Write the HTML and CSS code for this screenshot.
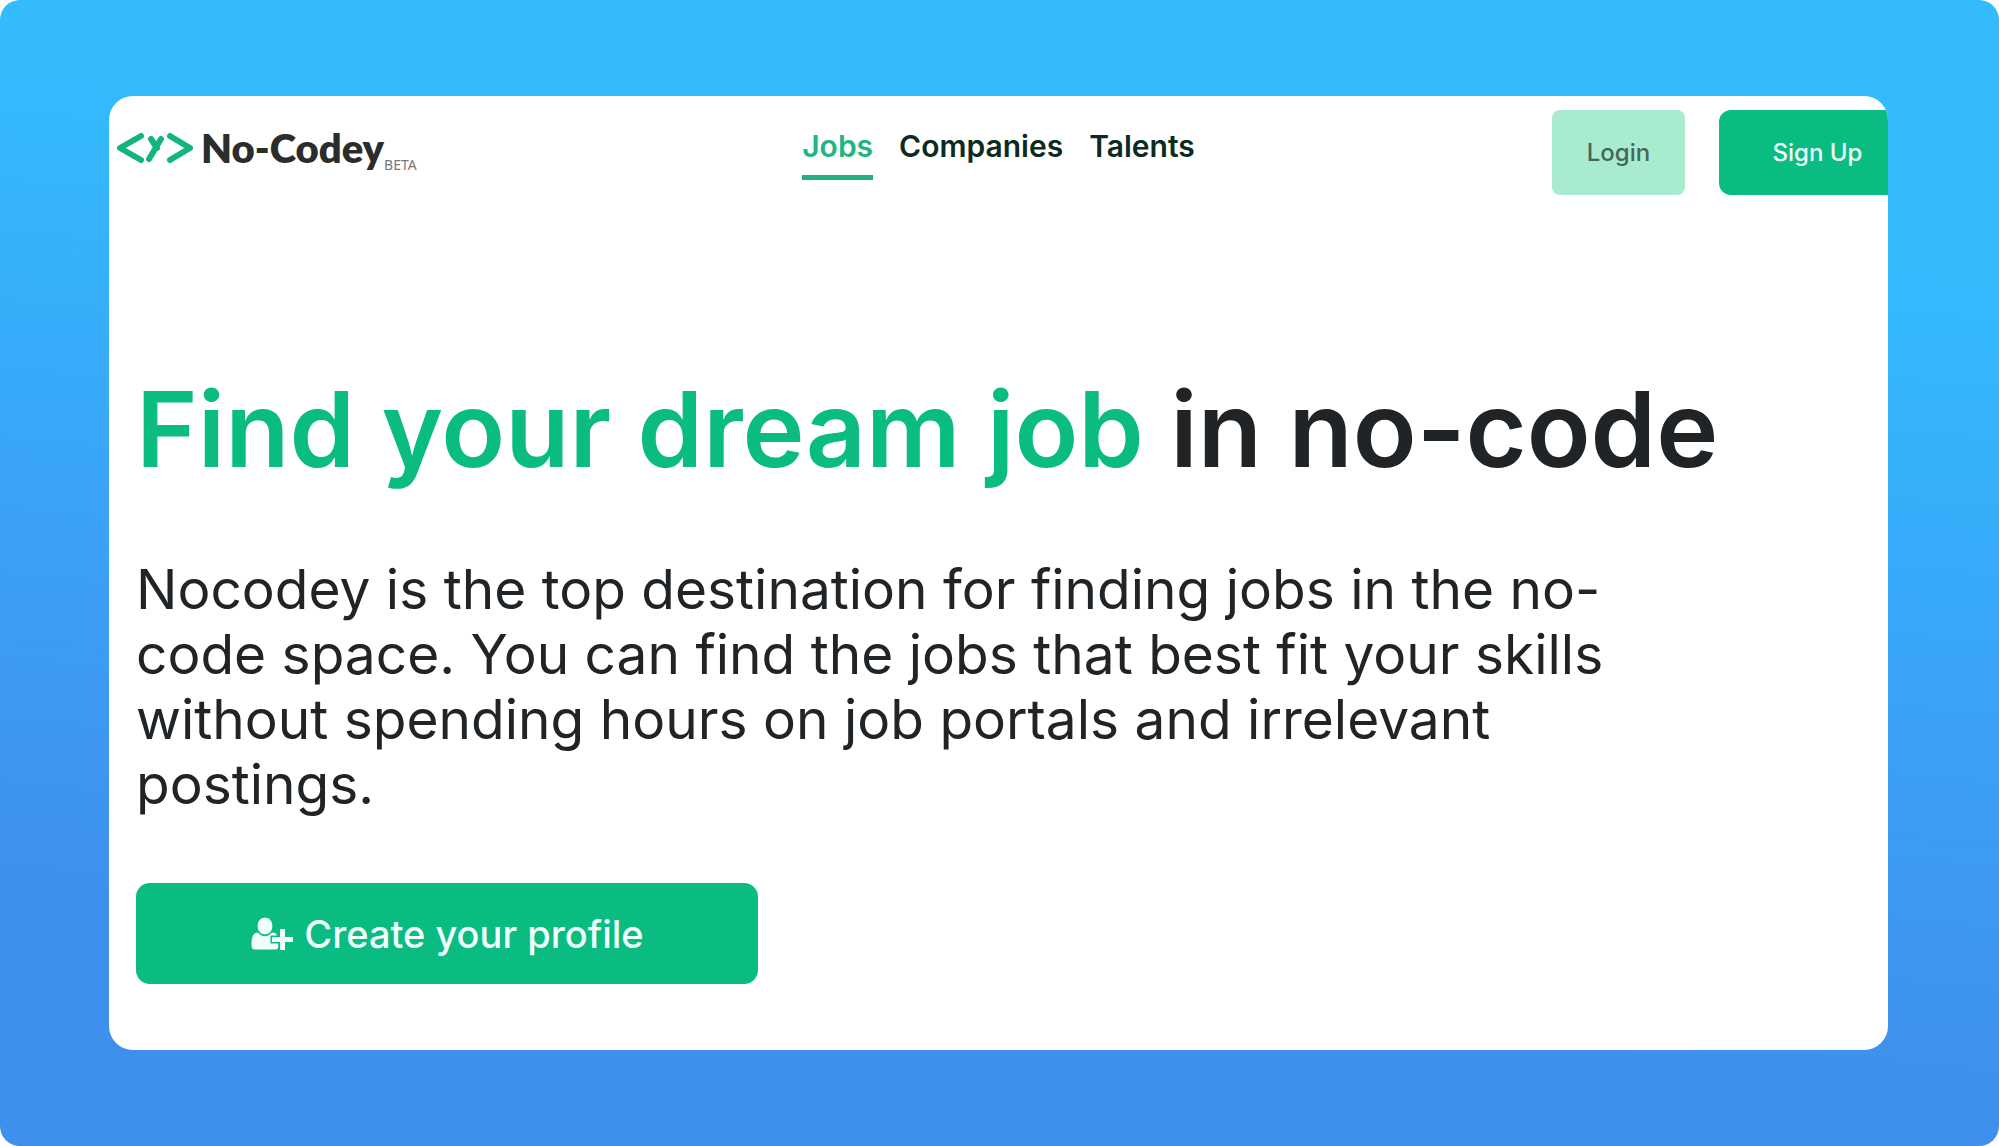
FILE: index.html
```html
<!DOCTYPE html>
<html lang="en">
<head>
<meta charset="utf-8">
<title>No-Codey</title>
<link rel="stylesheet" href="styles.css">
</head>
<body>
<div class="backdrop">
  <div class="card">
    <header class="topbar">
      <a class="brand" href="#">
        <svg class="brand-mark" viewBox="0 0 76 32" aria-hidden="true">
          <path d="M24 4 3 16l21 12M53 4l20 12-20 12M34 7l6 9M44 7 32 27"/>
        </svg>
        <span class="brand-name">No-Codey</span>
        <span class="brand-tag">BETA</span>
      </a>
      <nav class="nav">
        <a class="nav-link nav-link-active" href="#">Jobs</a>
        <a class="nav-link" href="#">Companies</a>
        <a class="nav-link" href="#">Talents</a>
      </nav>
      <div class="actions">
        <button class="button button-login" type="button">Login</button>
        <button class="button button-signup" type="button">Sign Up</button>
      </div>
    </header>
    <main class="hero">
      <h1 class="title"><span class="title-accent">Find your dream job</span> in no-code</h1>
      <p class="lead">Nocodey is the top destination for finding jobs in the no-code space. You can find the jobs that best fit your skills without spending hours on job portals and irrelevant postings.</p>
      <button class="button button-profile" type="button">
        <svg class="profile-icon" viewBox="0 0 44 34" aria-hidden="true">
          <path class="profile-body" d="M1 27c0-7 2-12 7-12 4 5 10 5 14 0 5 0 7 4 7 12 0 4-1 6-4 6H5c-3 0-4-2-4-6z"/>
          <ellipse class="profile-body" cx="15" cy="9" rx="8" ry="9"/>
          <path class="profile-plus" d="M30 12h5v8h8v5h-8v8h-5v-8h-8v-5h8z"/>
        </svg>
        <span>Create your profile</span>
      </button>
    </main>
  </div>
</div>
</body>
</html>
```
FILE: styles.css
```css
* { box-sizing: border-box; }
body { margin: 0; background: #fff; font-family: Inter, "Liberation Sans", sans-serif; }
.backdrop {
  min-height: 100vh;
  padding: 96px 111px 96px 109px;
  border-radius: 20px;
  background: linear-gradient(186deg, #33bbfe 21%, #3aa4f8 50%, #3f8fec 82%);
}
.card { overflow: hidden; border-radius: 24px; background: #fff; padding-bottom: 66px; }
.topbar {
  display: grid;
  grid-template-columns: 1fr auto 1fr;
  align-items: start;
  padding-top: 14px;
}
.brand { display: flex; align-items: flex-end; margin-top: 14px; padding-left: 8px; color: #2b2d2d; text-decoration: none; }
.brand-mark { width: 76px; height: 32px; margin: 0 8px 8px 0; fill: none; stroke: #12b581; stroke-width: 6; stroke-linecap: round; stroke-linejoin: round; }
.brand-name { font-family: Lato, sans-serif; font-size: 40px; line-height: 48px; font-weight: 800; }
.brand-tag { color: #777; font: 14px/14px "Noto Sans", sans-serif; }
.nav { display: flex; gap: 26px; padding-top: 20px; }
.nav-link { padding-bottom: 13px; border-bottom: 5px solid transparent; color: #0c2b20; font-size: 30px; line-height: 32px; font-weight: 600; text-decoration: none; }
.nav-link-active { color: #22b583; border-color: #22b07f; }
.actions { display: flex; justify-content: flex-end; gap: 34px; margin-right: -28px; }
.button { border: 0; font-family: inherit; color: #f0fffa; background: #0abb82; cursor: pointer; font-weight: 500; }
.button-login, .button-signup { height: 85px; font-size: 24px; }
.button-login { width: 133px; border-radius: 8px; background: #a8ebcf; color: #46665a; }
.button-signup { width: 197px; border-radius: 12px; }
.hero { padding: 174px 27px 0; }
.title { margin: 0; color: #202427; font-size: 105px; line-height: 120px; font-weight: 600; }
.title-accent { color: #0abb82; }
.lead { max-width: 1500px; margin: 68px 0 0; color: #202427; font-size: 55px; line-height: 65px; }
.button-profile { display: flex; align-items: center; justify-content: center; gap: 10px; width: 622px; max-width: 100%; height: 101px; margin-top: 66px; border-radius: 14px; font-size: 38px; }
.profile-icon { width: 44px; height: 34px; overflow: visible; fill: #f0fffa; }
.profile-body { stroke: #0abb82; stroke-width: 1; }
.profile-plus { stroke: #0abb82; stroke-width: 3; paint-order: stroke; }
```
